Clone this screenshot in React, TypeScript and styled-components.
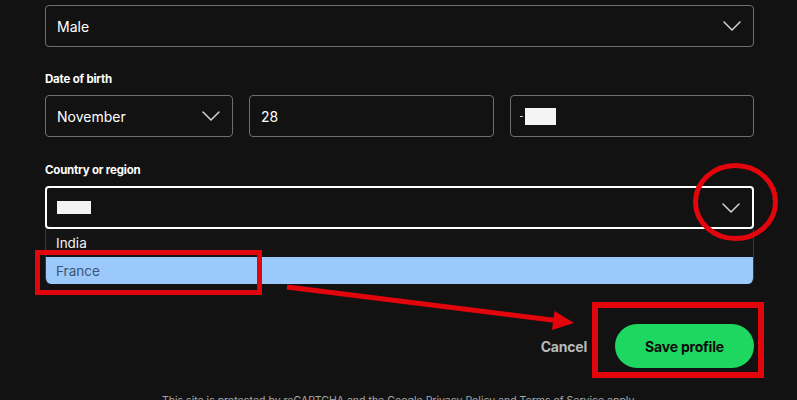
import styled, { createGlobalStyle } from "styled-components";

const GlobalStyle = createGlobalStyle`
  html, body {
    margin: 0;
    padding: 0;
    background: #121212;
    overflow: hidden;
  }
  body {
    font-family: "Inter", "Noto Sans", "Liberation Sans", sans-serif;
    color: #fff;
  }
`

const Page = styled.div`
  position: relative;
  width: 797px;
  height: 400px;
  background: #121212;
  overflow: hidden;
`

const Form = styled.div`
  width: 709px;
  margin-left: 45px;
  padding-top: 5px;
  display: flex;
  flex-direction: column;
`

const Label = styled.div`
  font-size: 11.5px;
  font-weight: 700;
  line-height: 16px;
  height: 16px;
  margin-top: ${(p: { $top: number }) => p.$top}px;
  margin-bottom: 8px;
  letter-spacing: -0.2px;
`

const Field = styled.div<{ $focused?: boolean }>`
  box-sizing: border-box;
  height: ${(p) => (p.$focused ? 43 : 42)}px;
  border: ${(p) => (p.$focused ? "2px solid #fff" : "1px solid #6f6f6f")};
  border-radius: 4px;
  display: flex;
  align-items: center;
  justify-content: space-between;
  padding: 0 12px 0 ${(p) => (p.$focused ? 10 : 11)}px;
  font-size: 14px;
  color: #fff;
  background: #121212;
`

const DateRow = styled.div`
  display: grid;
  grid-template-columns: 188px 1fr 1fr;
  column-gap: 16px;
`

const Redacted = styled.span<{ $w: number; $h: number }>`
  display: inline-block;
  width: ${(p) => p.$w}px;
  height: ${(p) => p.$h}px;
  background: #f4f4f4;
`

const YearMark = styled.span`
  display: inline-flex;
  align-items: center;
  gap: 2px;
  margin-left: -2px;
  &::before {
    content: "";
    width: 3px;
    height: 1px;
    background: #cfcfcf;
  }
`

const DropList = styled.div`
  border-left: 1px solid #3a3a3a;
  border-right: 1px solid #3a3a3a;
  border-radius: 0 0 6px 6px;
  overflow: hidden;
`

const Option = styled.div<{ $active?: boolean }>`
  height: ${(p) => (p.$active ? 27 : 28)}px;
  display: flex;
  align-items: center;
  padding-left: 10px;
  font-size: 13.5px;
  color: ${(p) => (p.$active ? "#3c5674" : "#f2f2f2")};
  background: ${(p) => (p.$active ? "#9cc9fb" : "#141414")};
`

const Actions = styled.div`
  display: flex;
  justify-content: flex-end;
  align-items: center;
  gap: 28px;
  margin-top: 40px;
`

const CancelButton = styled.button`
  background: none;
  border: none;
  padding: 0;
  font-family: inherit;
  font-size: 14px;
  font-weight: 700;
  color: #b9b9b9;
  letter-spacing: -0.2px;
`

const SaveButton = styled.button`
  width: 139px;
  height: 44px;
  border: none;
  border-radius: 22px;
  background: #1ed760;
  color: #0b0b0b;
  font-family: inherit;
  font-size: 14px;
  font-weight: 700;
  letter-spacing: -0.2px;
`

const Footnote = styled.div`
  margin-top: 27px;
  text-align: center;
  font-size: 10.5px;
  line-height: 12px;
  color: #a7a7a7;
`

const Overlay = styled.svg`
  position: absolute;
  inset: 0;
  pointer-events: none;
`

const Chevron = () => (
  <svg width="18" height="10" viewBox="0 0 18 10">
    <path d="M1 1 L9 9 L17 1" fill="none" stroke="#d4d4d4" strokeWidth="1.5" strokeLinecap="round" strokeLinejoin="round" />
  </svg>
);

const RED = "#e2060c";

const App = () => {
  return (
    <>
      <GlobalStyle />
      <Page>
        <Form>
          <Field>
            <span>Male</span>
            <Chevron />
          </Field>

          <Label $top={24}>Date of birth</Label>
          <DateRow>
            <Field>
              <span>November</span>
              <Chevron />
            </Field>
            <Field>
              <span>28</span>
            </Field>
            <Field>
              <YearMark>
                <Redacted $w={31} $h={17} />
              </YearMark>
            </Field>
          </DateRow>

          <Label $top={25}>Country or region</Label>
          <Field $focused>
            <Redacted $w={34} $h={13} />
            <Chevron />
          </Field>
          <DropList>
            <Option>India</Option>
            <Option $active>France</Option>
          </DropList>

          <Actions>
            <CancelButton>Cancel</CancelButton>
            <SaveButton>Save profile</SaveButton>
          </Actions>

          <Footnote>
            This site is protected by reCAPTCHA and the Google Privacy Policy and Terms of Service apply.
          </Footnote>
        </Form>

        {/* red annotations drawn over the form */}
        <Overlay width="797" height="400" viewBox="0 0 797 400">
          <rect x="37.5" y="252.5" width="222" height="40" fill="none" stroke={RED} strokeWidth="5" />
          <rect x="595" y="305" width="166" height="70" fill="none" stroke={RED} strokeWidth="6" />
          <ellipse cx="735.5" cy="202" rx="40" ry="36.5" fill="none" stroke={RED} strokeWidth="5" />
          <line x1="287" y1="287" x2="556" y2="320.5" stroke={RED} strokeWidth="5" />
          <polygon points="574,323 552,330 554.5,311" fill={RED} />
        </Overlay>
      </Page>
    </>
  );
};

export default App;
